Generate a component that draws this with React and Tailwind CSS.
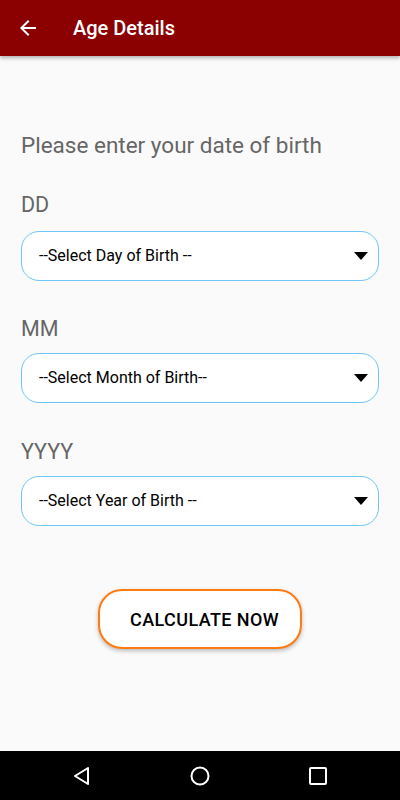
import React from "react";

const SelectBox = ({ label }) => (
  <div className="mx-[21px] h-[50px] rounded-[18px] border border-[#6ec6f5] bg-white flex items-center justify-between pl-[17px] pr-[10px]">
    <span className="text-[16px] text-black">{label}</span>
    <svg width="14" height="8" viewBox="0 0 14 8">
      <path d="M0 0 L14 0 L7 8 Z" fill="#000" />
    </svg>
  </div>
);

const Label = ({ children, className }) => (
  <p className={"ml-[21px] text-[21.5px] text-[#666666] leading-[24px] " + className}>
    {children}
  </p>
);

export default function App() {
  return (
    <div
      className="w-[400px] h-[800px] bg-[#fafafa] flex flex-col overflow-hidden"
      style={{ fontFamily: "Roboto, 'Noto Sans', sans-serif" }}
    >
      {/* Toolbar */}
      <div className="h-[56px] bg-[#8b0000] flex items-center shadow-[0_2px_4px_rgba(0,0,0,0.3)] relative z-10">
        <svg width="24" height="24" viewBox="0 0 24 24" className="ml-[16px]">
          <path
            d="M20 11H7.83l5.59-5.59L12 4l-8 8 8 8 1.41-1.41L7.83 13H20v-2z"
            fill="#fff"
          />
        </svg>
        <span className="ml-[33px] text-white text-[20px] font-medium">
          Age Details
        </span>
      </div>

      {/* Content */}
      <div className="flex-1 flex flex-col">
        <p className="mt-[75px] ml-[21px] text-[22.5px] text-[#666666] leading-[28px]">
          Please enter your date of birth
        </p>

        <Label className="mt-[34px]">DD</Label>
        <div className="mt-[14px]">
          <SelectBox label="--Select Day of Birth --" />
        </div>

        <Label className="mt-[36px]">MM</Label>
        <div className="mt-[12px]">
          <SelectBox label="--Select Month of Birth--" />
        </div>

        <Label className="mt-[37px]">YYYY</Label>
        <div className="mt-[12px]">
          <SelectBox label="--Select Year of Birth --" />
        </div>

        <div className="mt-[63px] flex justify-center">
          <button className="w-[204px] h-[60px] pl-[9px] rounded-[24px] border-2 border-[#ff7b10] bg-white shadow-[0_2px_4px_rgba(0,0,0,0.25)] text-[18px] font-medium tracking-[0.4px] text-black">
            CALCULATE NOW
          </button>
        </div>
      </div>

      {/* Nav bar */}
      <div className="h-[49px] bg-black flex items-center justify-center gap-[78px]">
        <div className="w-[40px] flex justify-center">
          <svg width="20" height="20" viewBox="0 0 20 20">
            <path d="M16 2 L3 10 L16 18 Z" fill="none" stroke="#fff" strokeWidth="2" strokeLinejoin="round" />
          </svg>
        </div>
        <div className="w-[40px] flex justify-center">
          <svg width="20" height="20" viewBox="0 0 20 20">
            <circle cx="10" cy="10" r="8.5" fill="none" stroke="#fff" strokeWidth="2" />
          </svg>
        </div>
        <div className="w-[40px] flex justify-center">
          <svg width="18" height="18" viewBox="0 0 18 18">
            <rect x="1" y="1" width="16" height="16" rx="1" fill="none" stroke="#fff" strokeWidth="2" />
          </svg>
        </div>
      </div>
    </div>
  );
}
